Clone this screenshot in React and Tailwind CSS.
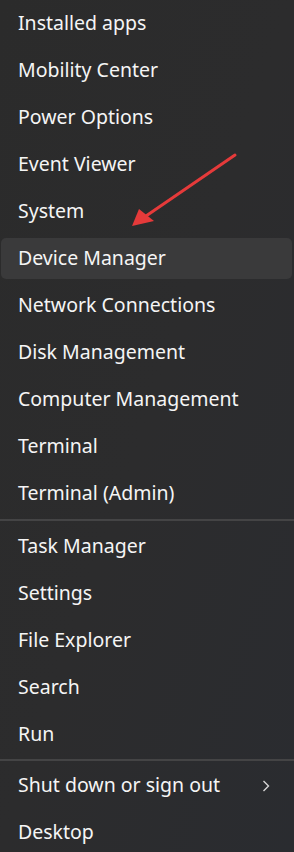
const GROUPS = [
  [
    'Installed apps',
    'Mobility Center',
    'Power Options',
    'Event Viewer',
    'System',
    'Device Manager',
    'Network Connections',
    'Disk Management',
    'Computer Management',
    'Terminal',
    'Terminal (Admin)',
  ],
  ['Task Manager', 'Settings', 'File Explorer', 'Search', 'Run'],
  ['Shut down or sign out', 'Desktop'],
]

const MenuItem = ({ label, active, submenu }) => (
  <div className="h-[47px] py-[3px] pl-[1px] pr-[2px]">
    <div
      className={
        'flex h-full items-center justify-between rounded-[5px] pl-[17px] pr-[22px] ' +
        (active ? 'bg-[#3a3a3b]' : '')
      }
    >
      <span className="pb-[2px] text-[19.5px] leading-none text-[#f5f5f5]">{label}</span>
      {submenu && (
        <svg width="8" height="12" viewBox="0 0 8 12" fill="none">
          <path d="M1.5 1 L6.5 6 L1.5 11" stroke="#d6d6d6" strokeWidth="1.4" />
        </svg>
      )}
    </div>
  </div>
)

export default function App() {
  return (
    <div
      className="relative h-[852px] w-[294px] overflow-hidden bg-gradient-to-br from-[#2b2b2b] via-[#2c2c2d] to-[#2a2c30]"
      style={{ fontFamily: '"Noto Sans", "Open Sans", sans-serif' }}
    >
      {GROUPS.map((group, gi) => (
        <div key={gi}>
          {gi === 1 && (
            <div className="py-[2px]">
              <div className="h-[2px] bg-[#444445]" />
            </div>
          )}
          {gi === 2 && (
            <div className="py-[1px]">
              <div className="h-[2px] bg-[#444445]" />
            </div>
          )}
          {group.map((label) => (
            <MenuItem
              key={label}
              label={label}
              active={label === 'Device Manager'}
              submenu={label === 'Shut down or sign out'}
            />
          ))}
        </div>
      ))}

      {/* annotation arrow */}
      <svg className="absolute left-0 top-0" width="294" height="852">
        <line x1="235" y1="155" x2="146" y2="216" stroke="#e53a3a" strokeWidth="3" strokeLinecap="round" />
        <polygon points="132,226 139,209 154,221" fill="#e53a3a" />
      </svg>
    </div>
  )
}
